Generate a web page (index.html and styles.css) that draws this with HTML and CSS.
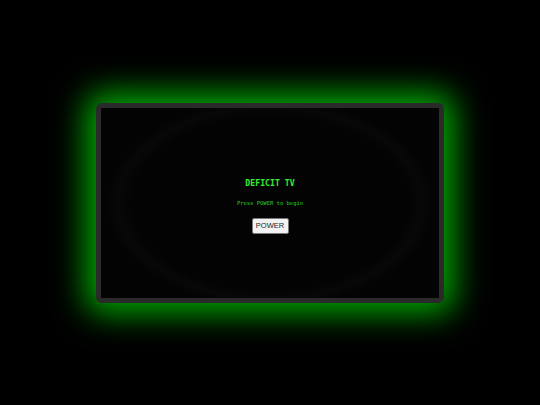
FILE: index.html
```html
<!DOCTYPE html>
<html>
<head>
<meta charset="utf-8">
<link rel="stylesheet" href="styles.css">
</head>
<body>
<div class="stage">
  <div class="tv">
    <div class="screen">
      <div class="title">DEFICIT TV</div>
      <div class="hint">Press POWER to begin</div>
      <button class="power">POWER</button>
    </div>
  </div>
</div>
</body>
</html>
```
FILE: styles.css
```css
html, body {
  margin: 0;
  padding: 0;
  background: #000;
}
.stage {
  width: 540px;
  height: 405px;
  display: flex;
  align-items: center;
  justify-content: center;
}
.tv {
  width: 348px;
  height: 200px;
  box-sizing: border-box;
  border: 5px solid #2a2a2a;
  border-radius: 6px;
  box-shadow: 0 0 32px 10px rgba(0, 200, 0, 0.85);
  background: #020202;
  overflow: hidden;
}
.screen {
  width: 100%;
  height: 100%;
  display: flex;
  flex-direction: column;
  align-items: center;
  justify-content: center;
  background:
    repeating-linear-gradient(90deg, rgba(255,255,255,0.008) 0 1px, transparent 1px 4px),
    radial-gradient(ellipse 50% 56% at 50% 50%, #030303 0 82%, #070707 90%, #030303 97%),
    #030303;
}
.title {
  font-family: "DejaVu Sans Mono", monospace;
  font-weight: bold;
  font-size: 8.2px;
  line-height: 10px;
  color: #33ee33;
  margin-top: 6px;
}
.hint {
  font-family: "DejaVu Sans Mono", monospace;
  font-size: 5.5px;
  line-height: 8px;
  color: #2bc82b;
  margin-top: 11px;
}
.power {
  margin-top: 11px;
  width: 37px;
  height: 16px;
  padding: 0;
  box-sizing: border-box;
  background: #f2f2f2;
  border: 1px solid #777;
  border-radius: 2px;
  font-family: "Liberation Sans", Arial, sans-serif;
  font-size: 7.5px;
  color: #222;
}
```
